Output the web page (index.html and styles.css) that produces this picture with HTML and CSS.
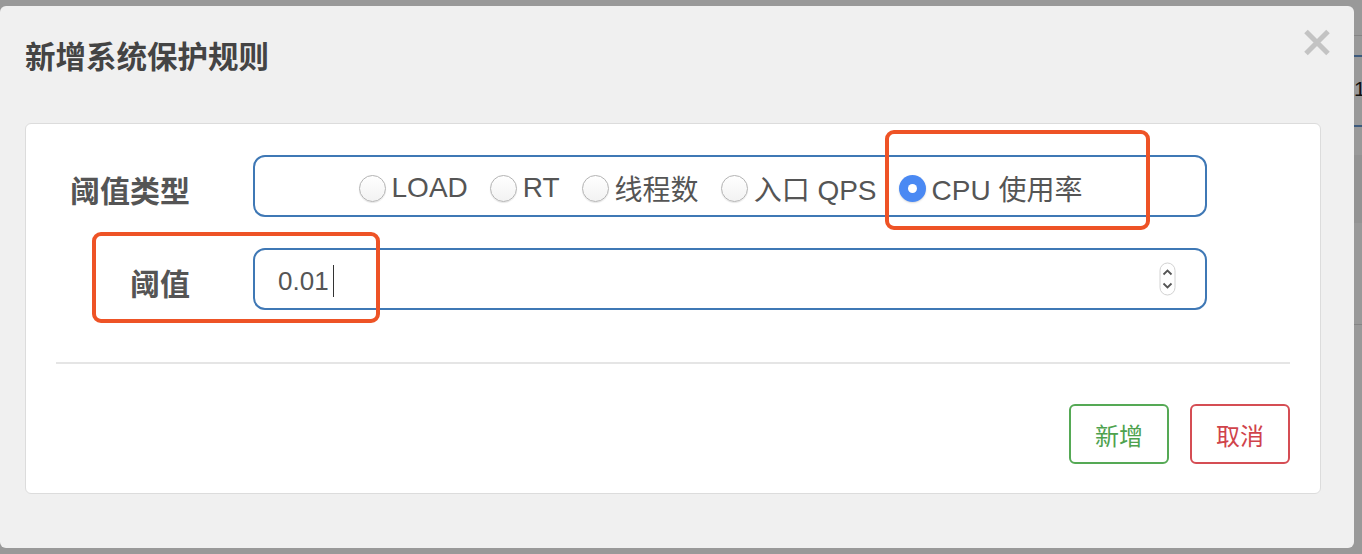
FILE: index.html
```html
<!DOCTYPE html>
<html lang="zh">
<head>
<meta charset="utf-8">
<title>新增系统保护规则</title>
<link rel="stylesheet" href="styles.css">
</head>
<body>
<div class="modal">
  <div class="modal-header">
    <h4 class="modal-title">新增系统保护规则</h4>
    <span class="close" aria-label="关闭">
      <svg width="28" height="27" viewBox="0 0 28 27"><path d="M3 2.5 L25 24.5 M25 2.5 L3 24.5" stroke="#c3c3c3" stroke-width="5" stroke-linecap="butt"/></svg>
    </span>
  </div>
  <div class="panel">
    <div class="form-row">
      <label class="form-label">阈值类型</label>
      <div class="control radio-group">
        <span class="radio-item"><span class="radio"></span><span>LOAD</span></span>
        <span class="radio-item"><span class="radio"></span><span>RT</span></span>
        <span class="radio-item"><span class="radio"></span><span>线程数</span></span>
        <span class="radio-item"><span class="radio"></span><span>入口 QPS</span></span>
        <span class="radio-item"><span class="radio checked"></span><span>CPU 使用率</span></span>
      </div>
    </div>
    <div class="form-row">
      <label class="form-label">阈值</label>
      <div class="control input">
        <span class="value">0.01</span><span class="caret"></span>
        <span class="spinner">
          <svg width="17" height="34" viewBox="0 0 17 34"><rect x="1" y="1" width="15" height="32" rx="7.5" fill="#fff" stroke="#d2d2d2"/><path d="M4.5 12.5 L8.5 8.5 L12.5 12.5 M4.5 21.5 L8.5 25.5 L12.5 21.5" fill="none" stroke="#555" stroke-width="1.8"/></svg>
        </span>
      </div>
    </div>
    <hr class="divider">
    <div class="actions">
      <button class="btn btn-green">新增</button>
      <button class="btn btn-red">取消</button>
    </div>
    <div class="annot annot-type"></div>
    <div class="annot annot-value"></div>
  </div>
</div>
<div class="bg-strip">
  <div class="s-gap1"></div>
  <div class="s-line"></div>
  <div class="s-gap2"></div>
  <div class="s-blue"></div>
  <div class="s-num">1</div>
  <div class="s-blue"></div>
  <div class="s-gap3"></div>
  <div class="s-band"></div>
  <div class="s-gap4"></div>
  <div class="s-line"></div>
</div>
</body>
</html>
```
FILE: styles.css
```css
* { box-sizing: border-box; }
html, body { margin: 0; padding: 0; }
body {
  width: 1362px;
  height: 554px;
  overflow: hidden;
  background: #999999;
  display: flex;
  align-items: flex-start;
  font-family: "Liberation Sans", "Noto Sans CJK SC", sans-serif;
  color: #555;
}
.modal {
  width: 1354px;
  height: 542px;
  margin-top: 6px;
  background: #f0f0f0;
  border-radius: 6px;
  padding: 0 33px 0 25px;
  display: flex;
  flex-direction: column;
}
.modal-header {
  height: 117px;
  display: flex;
  justify-content: space-between;
  align-items: flex-start;
  padding-top: 23px;
  margin-right: -10px;
}
.modal-title {
  margin: 11px 0 0 0;
  font-family: "Noto Sans CJK SC", sans-serif;
  font-size: 30.5px;
  line-height: 30px;
  font-weight: bold;
  color: #444;
}
.close { display: block; width: 28px; height: 27px; }
.close svg { display: block; }
.panel {
  position: relative;
  height: 371px;
  background: #fff;
  border: 1px solid #dcdcdc;
  border-radius: 6px;
  padding: 31px 0 0 0;
  display: flex;
  flex-direction: column;
}
.form-row {
  display: flex;
  align-items: center;
  height: 62px;
  margin-bottom: 31px;
}
.form-row:nth-child(2) { margin-bottom: 52px; }
.form-label {
  width: 164px;
  text-align: right;
  font-family: "Noto Sans CJK SC", sans-serif;
  font-size: 30px;
  font-weight: bold;
  color: #555;
  margin-top: 6px;
  margin-right: 63px;
  white-space: nowrap;
}
.control {
  width: 954px;
  height: 62px;
  border: 2px solid #3f78b5;
  border-radius: 12px;
  display: flex;
  align-items: center;
}
.radio-group {
  justify-content: center;
  padding-right: 19px;
  padding-top: 4px;
  gap: 22px;
  font-size: 28px;
  color: #555;
}
.radio-item {
  display: flex;
  align-items: center;
  gap: 6px;
  white-space: nowrap;
}
.radio {
  display: block;
  width: 27px;
  height: 27px;
  border-radius: 50%;
  border: 1px solid #b3b3b3;
  background: linear-gradient(#ffffff, #f2f2f2);
  box-shadow: 0 1px 1px rgba(0,0,0,0.1);
  margin-top: 1px;
}
.radio.checked {
  border: none;
  background: #4a89f3;
  position: relative;
  box-shadow: 0 1px 2px rgba(0,0,0,0.15);
}
.radio.checked::after {
  content: "";
  position: absolute;
  left: 9px;
  top: 9px;
  width: 9px;
  height: 9px;
  border-radius: 50%;
  background: #fff;
}
.input {
  padding-left: 23px;
  padding-right: 29px;
  padding-top: 4px;
  font-size: 26px;
  color: #555;
}
.value { line-height: 32px; }
.caret {
  display: block;
  width: 1px;
  height: 32px;
  background: #333;
  margin-left: 4px;
}
.spinner { margin-left: auto; display: block; height: 34px; margin-top: -4px; }
.spinner svg { display: block; }
.divider {
  margin: 0 30px;
  height: 2px;
  border: none;
  background: #e5e5e5;
}
.actions {
  margin-top: 40px;
  display: flex;
  justify-content: flex-end;
  gap: 21px;
  padding-right: 30px;
}
.btn {
  width: 100px;
  height: 60px;
  background: #fff;
  border-radius: 6px;
  font-family: "Noto Sans CJK SC", sans-serif;
  font-size: 24px;
  padding: 0;
  cursor: pointer;
}
.btn-green { border: 2px solid #55a955; color: #4ea24e; }
.btn-red { border: 2px solid #d54d54; color: #d0434b; }
.annot {
  position: absolute;
  border: 4px solid #ee5326;
  border-radius: 9px;
}
.annot-type { left: 859px; top: 6px; width: 265px; height: 100px; }
.annot-value { left: 66px; top: 108px; width: 288px; height: 91px; }

.bg-strip {
  width: 8px;
  height: 554px;
  display: flex;
  flex-direction: column;
  overflow: hidden;
}
.s-gap1 { height: 35px; }
.s-line { height: 1px; background: #858585; }
.s-gap2 { height: 19px; }
.s-blue { height: 2px; background: #3c5a7d; }
.s-num {
  height: 68px;
  font-size: 21px;
  line-height: 24px;
  letter-spacing: -5px;
  padding-top: 20px;
  color: #111;
  white-space: nowrap;
}
.s-gap3 { height: 28px; }
.s-band { height: 68px; background: #939393; }
.s-gap4 { height: 101px; }
```
